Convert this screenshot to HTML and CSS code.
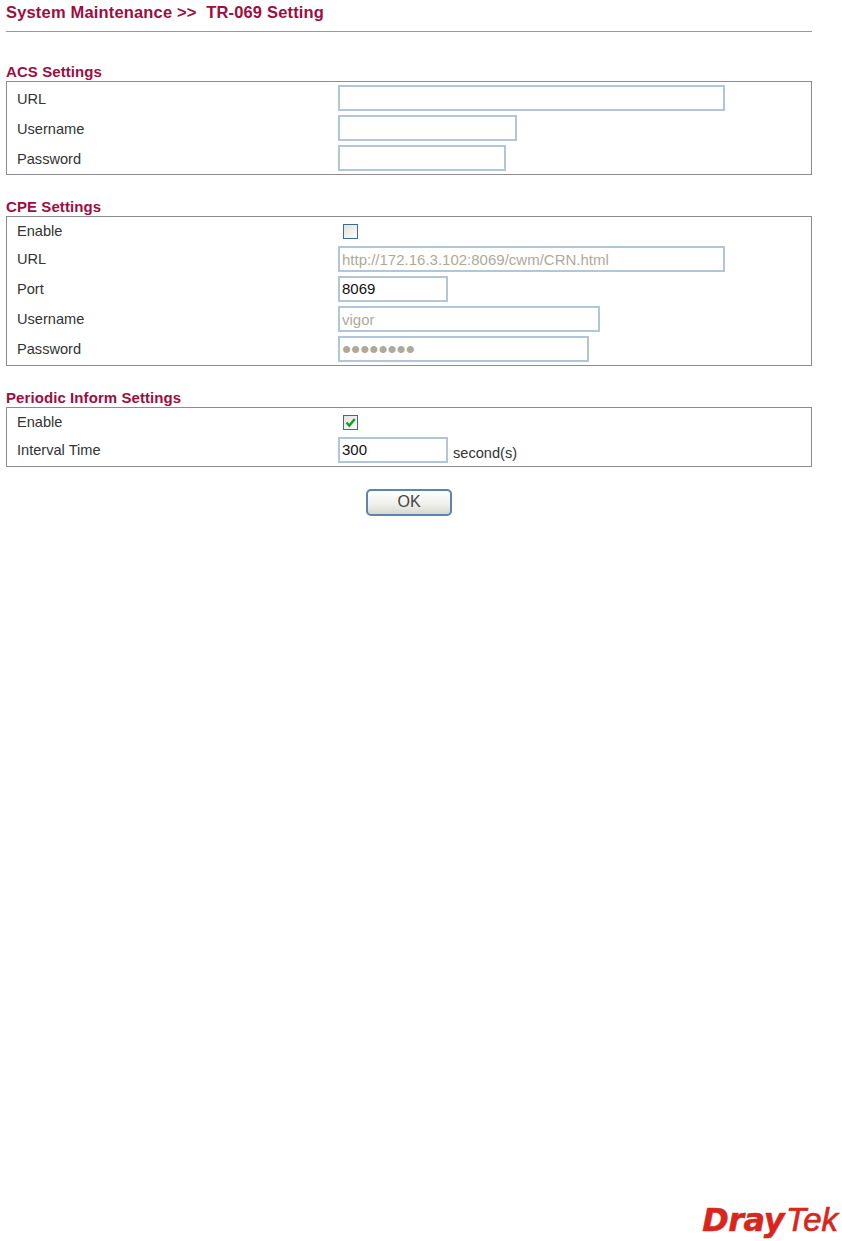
FILE: index.html
```html
<!DOCTYPE html>
<html lang="en">
<head>
<meta charset="utf-8">
<title>TR-069 Setting</title>
<link rel="stylesheet" href="styles.css">
</head>
<body>
<main class="page">
  <h1 class="page-title">System Maintenance &gt;&gt;&nbsp; TR-069 Setting</h1>
  <hr class="rule">

  <section class="section section-first">
    <h2 class="section-title">ACS Settings</h2>
    <div class="box box-acs">
      <div class="row"><span class="label">URL</span><input class="field w-url" type="text"></div>
      <div class="row"><span class="label">Username</span><input class="field w-user" type="text"></div>
      <div class="row"><span class="label">Password</span><input class="field w-pass" type="password"></div>
    </div>
  </section>

  <section class="section">
    <h2 class="section-title">CPE Settings</h2>
    <div class="box">
      <div class="row row-check"><span class="label">Enable</span><span class="check"></span></div>
      <div class="row"><span class="label">URL</span><input class="field w-url" type="text" disabled value="http://172.16.3.102:8069/cwm/CRN.html"></div>
      <div class="row"><span class="label">Port</span><input class="field w-port" type="text" value="8069"></div>
      <div class="row"><span class="label">Username</span><input class="field w-cuser" type="text" disabled value="vigor"></div>
      <div class="row"><span class="label">Password</span><input class="field field-mask w-cpass" type="password" disabled value="vigorpwd"></div>
    </div>
  </section>

  <section class="section">
    <h2 class="section-title">Periodic Inform Settings</h2>
    <div class="box">
      <div class="row row-check"><span class="label">Enable</span><span class="check"><svg class="tick" viewBox="0 0 11 11" width="11" height="11"><path d="M1.5 5.5 L4.3 8.6 L9.8 2" fill="none" stroke="#1c9a2c" stroke-width="2.4"/></svg></span></div>
      <div class="row"><span class="label">Interval Time</span><input class="field w-port" type="text" value="300"><span class="unit">second(s)</span></div>
    </div>
  </section>

  <div class="actions"><button class="ok" type="button">OK</button></div>
</main>
<footer class="brand"><span class="brand-dray">Dray</span><span class="brand-tek">Tek</span></footer>
</body>
</html>
```
FILE: styles.css
```css
html, body { margin: 0; padding: 0; background: #fff; }
body {
  height: 1241px;
  overflow: hidden;
  display: flex;
  flex-direction: column;
  font-family: "Liberation Sans", Arial, sans-serif;
  color: #333;
}
.page { width: 806px; margin-left: 6px; }
.page-title {
  margin: 0;
  padding-top: 4px;
  height: 26px;
  box-sizing: border-box;
  line-height: 17px;
  font-size: 16.5px;
  letter-spacing: 0.17px;
  font-weight: bold;
  color: #a00d40;
}
.rule { margin: 5px 0 0; border: 0; border-top: 1px solid #999; height: 1px; }
.section { margin-top: 25px; }
.section-first { margin-top: 32px; }
.section-title {
  margin: 0;
  height: 16px;
  line-height: 14px;
  font-size: 15px;
  letter-spacing: 0.08px;
  font-weight: bold;
  color: #a00d40;
}
.box {
  border: 1px solid #8c8c8c;
  padding: 3px 0;
  display: flex;
  flex-direction: column;
  gap: 4px;
}
.row { display: flex; align-items: center; height: 26px; }
.row-check { height: 22px; }
.label { width: 320px; margin-left: 10px; margin-right: 1px; font-size: 14.6px; }
.box-acs .label { padding-top: 1px; }
.field {
  box-sizing: border-box;
  height: 26px;
  margin: 0;
  padding: 0 2px;
  border: 2px solid #b2c6da;
  border-radius: 0;
  background: #fff;
  font: 15px "Liberation Sans", Arial, sans-serif;
  color: #111;
  outline: 0;
}
.field:disabled { color: #b0a998; background: #fff; }
.field-mask { font-size: 26px; padding-left: 2px; }
.w-url { width: 387px; }
.w-user { width: 179px; }
.w-pass { width: 168px; }
.w-port { width: 110px; padding-bottom: 2px; }
.w-cuser { width: 262px; }
.w-cpass { width: 251px; }
.check {
  box-sizing: border-box;
  width: 15px;
  height: 15px;
  margin-left: 5px;
  display: flex;
  align-items: center;
  justify-content: center;
  border: 1px solid #3e6a94;
  background: linear-gradient(135deg, #e3e3dc, #fbfbfa);
}
.tick { display: block; }
.unit { margin-left: 5px; padding-top: 5px; font-size: 14.6px; }
.actions { display: flex; margin-top: 22px; padding-left: 360px; }
.ok {
  box-sizing: border-box;
  width: 86px;
  height: 27px;
  padding: 0 0 2px;
  border: 2px solid #5f84a8;
  border-radius: 5px;
  background: linear-gradient(#fff, #eeeeea 60%, #d8d8d2);
  font: 16px "Liberation Sans", Arial, sans-serif;
  color: #444;
}
.brand {
  margin-top: auto;
  margin-right: 4px;
  margin-bottom: 3px;
  align-self: flex-end;
  display: flex;
  align-items: baseline;
  gap: 2px;
  color: #d9261c;
  font-style: italic;
  line-height: 36px;
  white-space: nowrap;
}
.brand-dray { font-family: "DejaVu Sans", sans-serif; font-weight: bold; font-size: 32px; letter-spacing: -0.5px; -webkit-text-stroke: 0.5px #d9261c; }
.brand-tek { font-family: "Liberation Sans", Arial, sans-serif; font-weight: normal; font-size: 33px; -webkit-text-stroke: 0.7px #d9261c; }
```
